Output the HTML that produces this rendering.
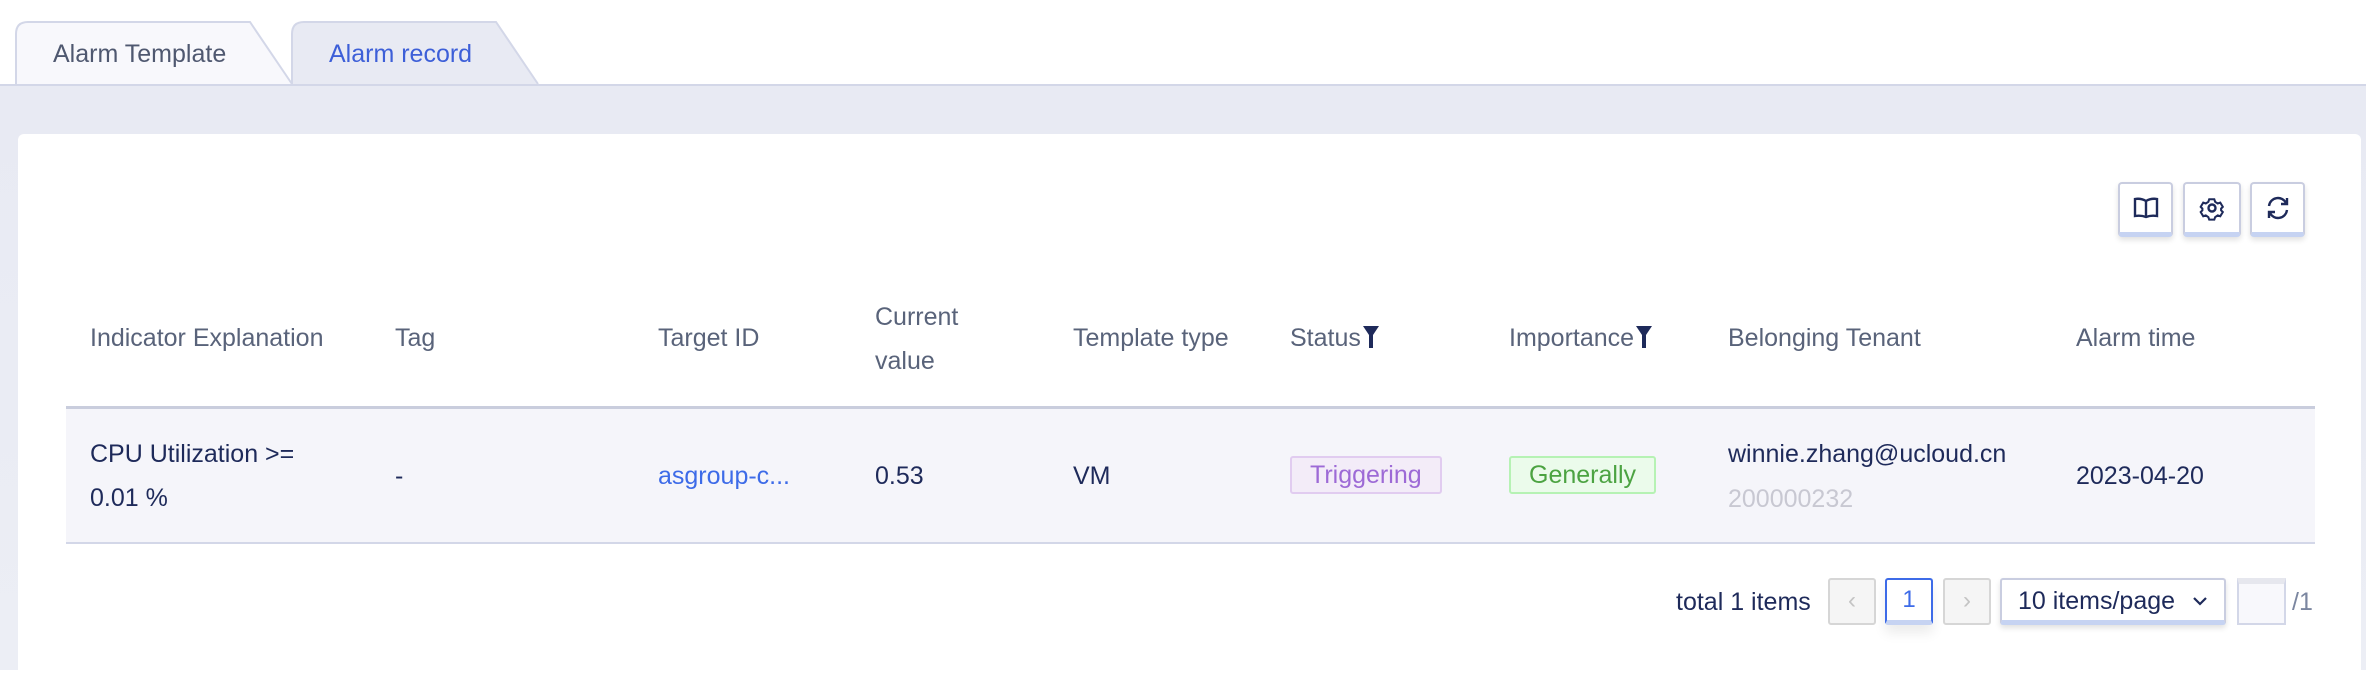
<!DOCTYPE html>
<html><head><meta charset="utf-8"><style>
*{box-sizing:border-box;margin:0;padding:0}
body{width:2366px;height:670px;overflow:hidden;background:#fff;font-family:"Liberation Sans",sans-serif;position:relative}
.a{position:absolute}
.band{left:0;top:84px;width:2366px;height:586px;background:linear-gradient(#e8eaf3,#eceef5);border-top:2px solid #d3d7e8}
.card{left:18px;top:134px;width:2343px;height:560px;background:#fff;border-radius:6px}
.tab{top:22px;height:64px;font-size:25px;line-height:64px}
.ib{top:182px;width:55px;height:55px;background:#fff;border:2px solid #c9cde0;border-bottom:5px solid #c6d3f2;border-radius:4px;box-shadow:0 3px 6px rgba(0,0,0,.12);display:flex;align-items:center;justify-content:center}
.h{top:320px;font-size:25px;color:#59637a;line-height:36px;white-space:nowrap}
.c{font-size:25px;color:#1e2a5a;white-space:nowrap}
.tag{top:456px;height:38px;font-size:25px;line-height:34px;padding:0 18px;border:2px solid;border-radius:3px}
.f{display:inline-block;vertical-align:-2px;margin-left:2px}
</style></head><body>
<div class="a band"></div>
<svg class="a" style="left:0;top:0" width="600" height="90">
<path d="M16 84 V34 Q16 22 28 22 H250 L292 84" fill="#f8f8fc" stroke="#d3d7e8" stroke-width="2"/>
<path d="M292 84 V34 Q292 22 304 22 H496 L538 84" fill="#e8eaf3" stroke="#d3d7e8" stroke-width="2"/>
</svg>
<div class="a tab" style="left:53px;color:#4f5870">Alarm Template</div>
<div class="a tab" style="left:329px;color:#3d5fd8">Alarm record</div>
<div class="a card"></div>
<div class="a ib" style="left:2118px"><svg width="26" height="24" viewBox="0 0 26 24" fill="none" stroke="#1e2a5a" stroke-width="2.4"><path d="M13 5 Q8 2 2 3 V20 Q8 19 13 21 Q18 19 24 20 V3 Q18 2 13 5 V21"/></svg></div>
<div class="a ib" style="left:2183px;width:58px"><svg width="26" height="26" viewBox="0 0 26 26" fill="none" stroke="#1e2a5a" stroke-width="2.4"><path d="M10 3h6l1 3 3 2 3-1 3 5-2 2v2l2 2-3 5-3-1-3 2-1 3h-6l-1-3-3-2-3 1-3-5 2-2v-2l-2-2 3-5 3 1 3-2z" transform="scale(.85) translate(2 2)"/><circle cx="13" cy="13" r="3.5"/></svg></div>
<div class="a ib" style="left:2250px"><svg width="26" height="26" viewBox="0 0 26 26" fill="none" stroke="#1e2a5a" stroke-width="2.4"><path d="M4 11 A9 9 0 0 1 21 8 M22 3v6h-6 M22 15 A9 9 0 0 1 5 18 M4 23v-6h6"/></svg></div>
<div class="a h" style="left:90px">Indicator Explanation</div>
<div class="a h" style="left:395px">Tag</div>
<div class="a h" style="left:658px">Target ID</div>
<div class="a h" style="left:875px;top:295px;line-height:44px">Current<br>value</div>
<div class="a h" style="left:1073px">Template type</div>
<div class="a h" style="left:1290px">Status<svg class="f" width="16" height="22" viewBox="0 0 16 22"><path d="M0 0H16L10 9V22H6V9Z" fill="#1e2a5a"/></svg></div>
<div class="a h" style="left:1509px">Importance<svg class="f" width="16" height="22" viewBox="0 0 16 22"><path d="M0 0H16L10 9V22H6V9Z" fill="#1e2a5a"/></svg></div>
<div class="a h" style="left:1728px">Belonging Tenant</div>
<div class="a h" style="left:2076px">Alarm time</div>
<div class="a" style="left:66px;top:406px;width:2249px;height:138px;background:#f5f5fa;border-top:3px solid #c9cddd;border-bottom:2px solid #d3d7e8"></div>
<div class="a c" style="left:90px;top:432px;line-height:44px">CPU Utilization &gt;=<br>0.01 %</div>
<div class="a c" style="left:395px;top:462px">-</div>
<div class="a c" style="left:658px;top:462px;color:#3d6be8">asgroup-c...</div>
<div class="a c" style="left:875px;top:462px">0.53</div>
<div class="a c" style="left:1073px;top:462px">VM</div>
<div class="a tag" style="left:1290px;color:#9d6ad6;background:#f3ecf8;border-color:#e1ccf0">Triggering</div>
<div class="a tag" style="left:1509px;color:#4ca342;background:#ebfbeb;border-color:#b6f2b4">Generally</div>
<div class="a c" style="left:1728px;top:440px">winnie.zhang@ucloud.cn</div>
<div class="a c" style="left:1728px;top:485px;color:#c8c8d2">200000232</div>
<div class="a c" style="left:2076px;top:462px">2023-04-20</div>
<div class="a c" style="left:1676px;top:588px">total 1 items</div>
<div class="a" style="left:1828px;top:578px;width:48px;height:47px;background:#f5f5f5;border:2px solid #d6d6d6;border-radius:3px;color:#c4c4c4;font-size:24px;text-align:center;line-height:42px">‹</div>
<div class="a" style="left:1885px;top:578px;width:48px;height:47px;background:#fff;border:2px solid #3d6be8;border-bottom:5px solid #c6d3f2;border-radius:3px;color:#3d6be8;font-size:24px;text-align:center;line-height:40px;box-shadow:0 8px 12px rgba(0,0,0,.08)">1</div>
<div class="a" style="left:1943px;top:578px;width:48px;height:47px;background:#f5f5f5;border:2px solid #d6d6d6;border-radius:3px;color:#c4c4c4;font-size:24px;text-align:center;line-height:42px">›</div>
<div class="a c" style="left:2000px;top:578px;width:226px;height:47px;background:#fff;border:2px solid #c9cde0;border-bottom:5px solid #c6d3f2;border-radius:3px;padding-left:16px;line-height:42px;box-shadow:0 3px 6px rgba(0,0,0,.12)">10 items/page<svg class="a" style="left:190px;top:16px" width="16" height="10" viewBox="0 0 16 10" fill="none" stroke="#1e2a5a" stroke-width="2.2"><path d="M2 2l6 6 6-6"/></svg></div>
<div class="a" style="left:2237px;top:578px;width:49px;height:47px;background:#f8f8fc;border:2px solid #d3d7e8;border-top:6px solid #e6e7ee"></div>
<div class="a c" style="left:2292px;top:588px;color:#7b86a0">/1</div>
</body></html>
